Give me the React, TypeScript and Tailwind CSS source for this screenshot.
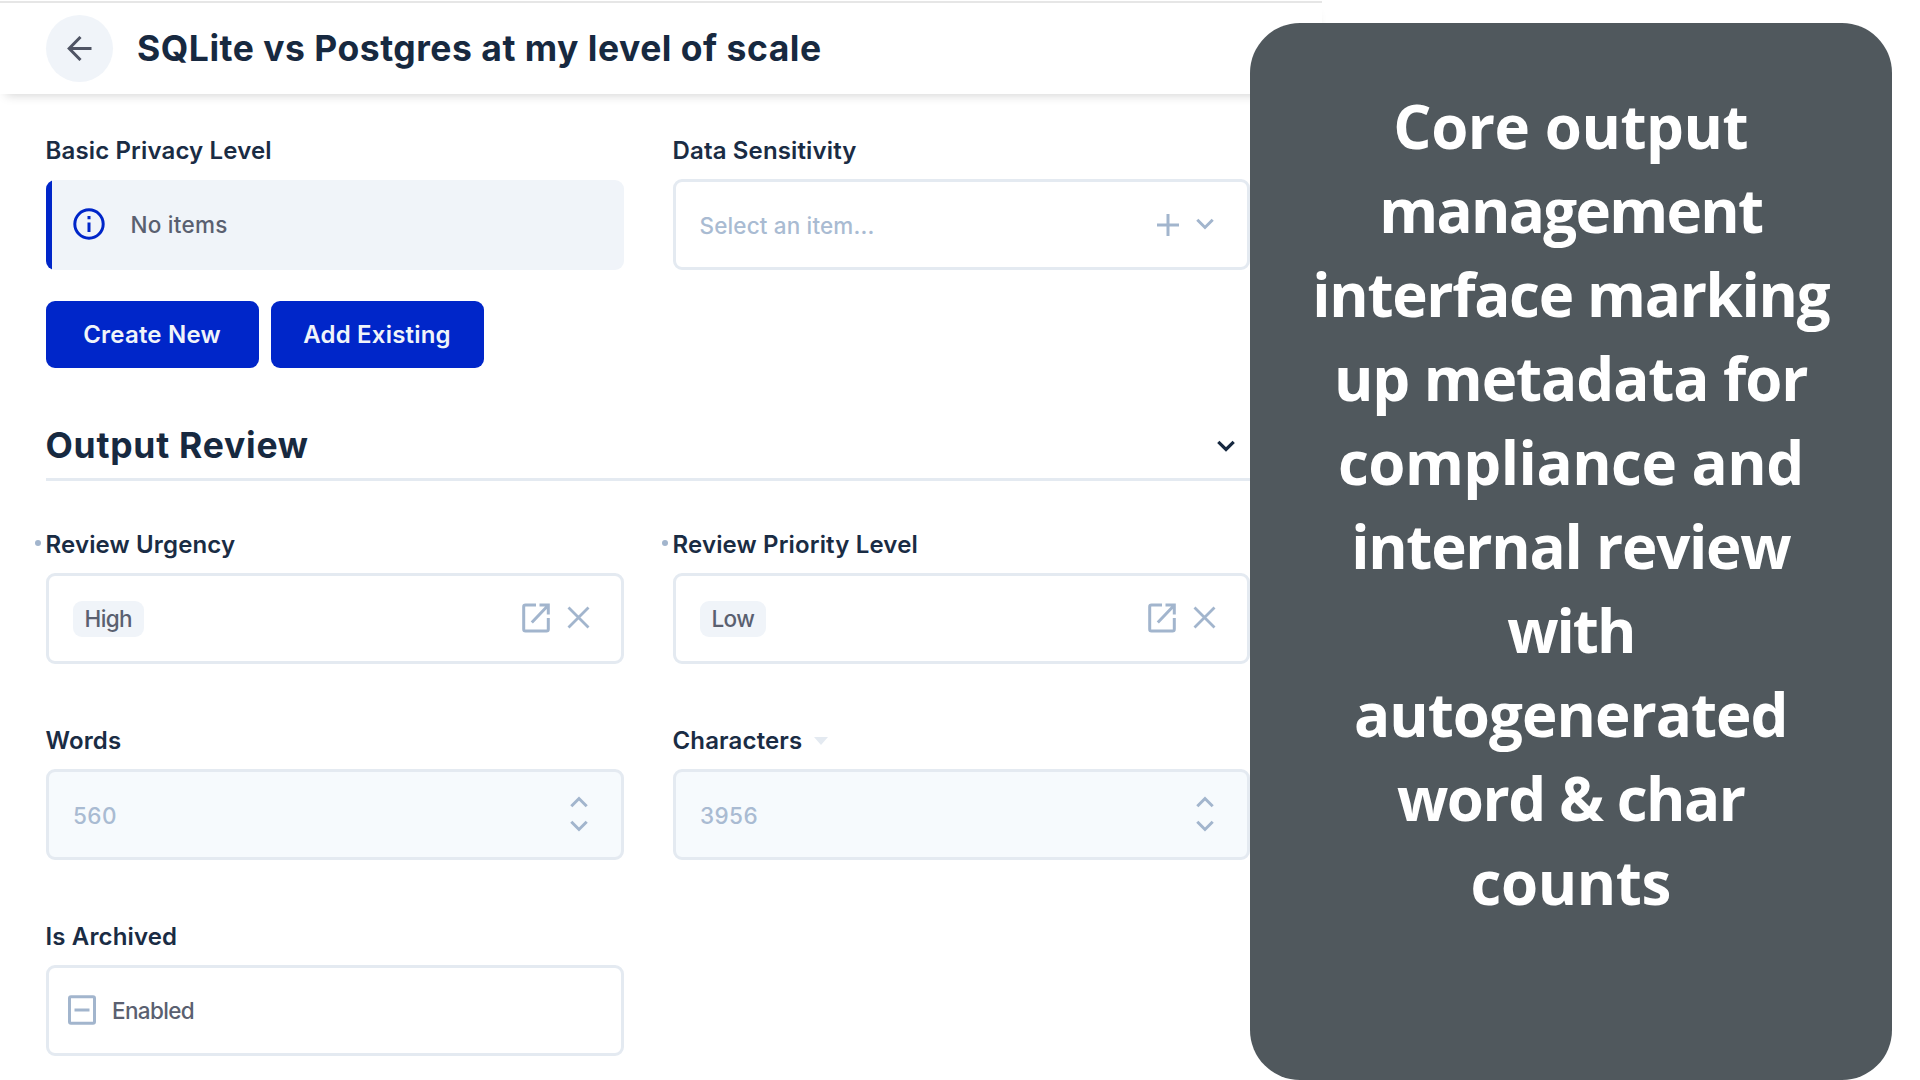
import type { ReactNode } from 'react';

type IconProps = { d: string; w: number; h: number; className: string; stroke?: number };

function Stroke({ d, w, h, className, stroke = 3 }: IconProps) {
  return (
    <svg width={w} height={h} viewBox={`0 0 ${w} ${h}`} fill="none" stroke="currentColor" strokeWidth={stroke} className={className}>
      <path d={d} />
    </svg>
  );
}

const CHEVRON_DOWN = 'M1.3 1.8L9 9.5L16.700 1.8';
const CHEVRON_UP = 'M1.3 10.200L9 2.5L16.700 10.200';

function OpenIcon() {
  return (
    <svg width="28" height="30" viewBox="0 0 28 30" fill="none" stroke="currentColor" strokeWidth="3">
      <path d="M14 2H3.500Q1.700 2 1.700 3.800V26.200Q1.700 28 3.500 28H24.500Q26.300 28 26.300 26.200V15M17.500 2H26.300V11.500M26 2.500L9.800 19.500" />
    </svg>
  );
}

function Label({ children, required }: { children: ReactNode; required?: boolean }) {
  return (
    <div className="relative flex h-9 items-center text-[24px] leading-9 font-semibold tracking-[0.15px] text-[#1a2c44]">
      {required && <span className="absolute top-[13px] -left-[11px] size-[6px] rounded-full bg-[#a2b5cd]" />}
      {children}
    </div>
  );
}

function Box({ children, muted }: { children: ReactNode; muted?: boolean }) {
  return (
    <div
      className={`mt-[10px] flex h-[91px] items-center rounded-[9px] border-[3px] border-[#e4eaf1] pr-[32px] pl-[24px] text-[22.5px] font-medium ${
        muted ? 'bg-[#f6fafd] text-[#a9bbd2]' : 'bg-white text-[#5a6070]'
      }`}
    >
      {children}
    </div>
  );
}

function Relation({ value }: { value: string }) {
  return (
    <Box>
      <span className="flex h-9 items-center rounded-[9px] bg-[#f0f4f9] px-3 tracking-[-0.6px]">{value}</span>
      <span className="-mt-[2px] -mr-[1px] ml-auto flex items-center gap-[17px] text-[#a2b5cd]">
        <OpenIcon />
        <Stroke d="M1.500 1.500L21.500 21.500M21.500 1.500L1.500 21.500" w={23} h={23} stroke={2.8} className="" />
      </span>
    </Box>
  );
}

function Stepper({ value }: { value: string }) {
  return (
    <Box muted>
      <span className="mt-[3px] ml-[0.5px] tracking-[0.4px]">{value}</span>
      <span className="mr-[1px] -mt-[2px] ml-auto flex flex-col gap-[12px] text-[#a2b5cd]">
        <Stroke d={CHEVRON_UP} w={18} h={12} className="" />
        <Stroke d={CHEVRON_DOWN} w={18} h={12} className="" />
      </span>
    </Box>
  );
}

const lines = [
  { text: 'Core output', track: 'tracking-[-0.45px]' },
  { text: 'management', track: 'tracking-[-1.7px]' },
  { text: 'interface marking', track: 'tracking-[-1.3px]' },
  { text: 'up metadata for', track: 'tracking-[-1.05px]' },
  { text: 'compliance and', track: 'tracking-[-0.5px]' },
  { text: 'internal review', track: 'tracking-[-1.25px]' },
  { text: 'with', track: 'tracking-[-2px]' },
  { text: 'autogenerated', track: 'tracking-[-0.95px]' },
  { text: 'word & char', track: 'tracking-[-1.45px]' },
  { text: 'counts', track: 'tracking-[-0.4px]' },
];

export default function App() {
  return (
    <div className="relative h-[1080px] w-[1920px] overflow-hidden bg-white font-['Inter',sans-serif]">
      <div className="w-[1322px] pt-[1px]">
        <header className="flex h-[93px] items-center border-t-2 border-[#e6e6e6] bg-white pl-[45.500px] shadow-[0_7px_10px_-6px_rgba(0,0,0,0.18)]">
          <button className="flex size-[67px] items-center justify-center rounded-full bg-[#f0f4f9] text-[#4f5464]">
            <Stroke d="M24.500 12.500H2.500M13.500 1L2.200 12.500L13.500 24" w={25} h={25} className="" />
          </button>
          <h1 className="ml-[24.500px] text-[35.5px] leading-[44px] font-bold tracking-[0.5px] text-[#172940]">SQLite vs Postgres at my level of scale</h1>
        </header>

        <main className="pt-[39px] pl-[45.500px]">
          <div className="grid grid-cols-[578px_577px] gap-x-[49px]">
            <div>
              <Label>Basic Privacy Level</Label>
              <div className="mt-[11px] flex h-[90px] overflow-hidden rounded-[9px] bg-[#f0f4f9] text-[22.5px] font-medium text-[#5a6070]">
                <span className="w-[6px] bg-[#0026c9]" />
                <span className="ml-[21px] flex items-center">
                  <svg width="32" height="32" viewBox="0 0 32 32" fill="none" className="-mt-[2px] text-[#0026c9]">
                    <circle cx="16" cy="16" r="14.200" stroke="currentColor" strokeWidth="3" />
                    <path d="M16 14.500V24M16 8V11.200" stroke="currentColor" strokeWidth="3" />
                  </svg>
                  <span className="ml-[26px] tracking-[0.25px]">No items</span>
                </span>
              </div>
              <div className="mt-[31px] flex gap-3">
                {['Create New', 'Add Existing'].map((t) => (
                  <button key={t} className="h-[67px] w-[213px] rounded-[9px] bg-[#0026c9] text-[24px] font-semibold tracking-[0.2px] text-[#f0f4f9]">
                    {t}
                  </button>
                ))}
              </div>
            </div>
            <div>
              <Label>Data Sensitivity</Label>
              <Box>
                <span className="mt-[3px] tracking-[0.15px] text-[#a9bbd2]">Select an item...</span>
                <span className="mr-[1px] ml-auto flex items-center gap-[17px] text-[#a2b5cd]">
                  <Stroke d="M11 0V22M0 11H22" w={22} h={22} className="" />
                  <Stroke d={CHEVRON_DOWN} w={18} h={12} className="-mt-[2px]" />
                </span>
              </Box>
            </div>
          </div>

          <div className="mt-[40px] flex h-[73px] w-[1204px] items-center border-b-[3px] border-[#e4eaf1] pt-[5px] text-[#172940]">
            <h2 className="text-[35.5px] leading-[44px] font-bold tracking-[0.75px]">Output Review</h2>
            <Stroke d={CHEVRON_DOWN} w={18} h={12} className="mr-[15px] ml-auto" stroke={3.2} />
          </div>

          <div className="mt-[46px] grid grid-cols-[578px_577px] gap-x-[49px] gap-y-[59px]">
            <div>
              <Label required>Review Urgency</Label>
              <Relation value="High" />
            </div>
            <div>
              <Label required>Review Priority Level</Label>
              <Relation value="Low" />
            </div>
            <div>
              <Label>Words</Label>
              <Stepper value="560" />
            </div>
            <div>
              <Label>
                Characters
                <svg width="14" height="8" viewBox="0 0 14 8" className="ml-3 fill-[#e4eaf1]">
                  <path d="M0 0H14L7 8Z" />
                </svg>
              </Label>
              <Stepper value="3956" />
            </div>
            <div>
              <Label>Is Archived</Label>
              <Box>
                <svg width="28" height="30" viewBox="0 0 28 30" fill="none" stroke="#a2b5cd" strokeWidth="3" className="-mt-[1px] -ml-[4.500px]">
                  <rect x="1.500" y="1.700" width="25" height="26.600" rx="1.500" />
                  <path d="M6.500 15H21.500" />
                </svg>
                <span className="ml-[16px] tracking-[-0.65px]">Enabled</span>
              </Box>
            </div>
          </div>
        </main>
      </div>

      <aside className="absolute top-[22.500px] left-[1249.500px] flex h-[1057.500px] w-[642.500px] flex-col items-center rounded-[50px] bg-[#50585d] pt-[61.500px] font-['Open_Sans',sans-serif] text-[60px] leading-[84px] font-bold text-white">
        {lines.map((l) => (
          <div key={l.text} className={`whitespace-nowrap ${l.track}`}>
            {l.text}
          </div>
        ))}
      </aside>
    </div>
  );
}
